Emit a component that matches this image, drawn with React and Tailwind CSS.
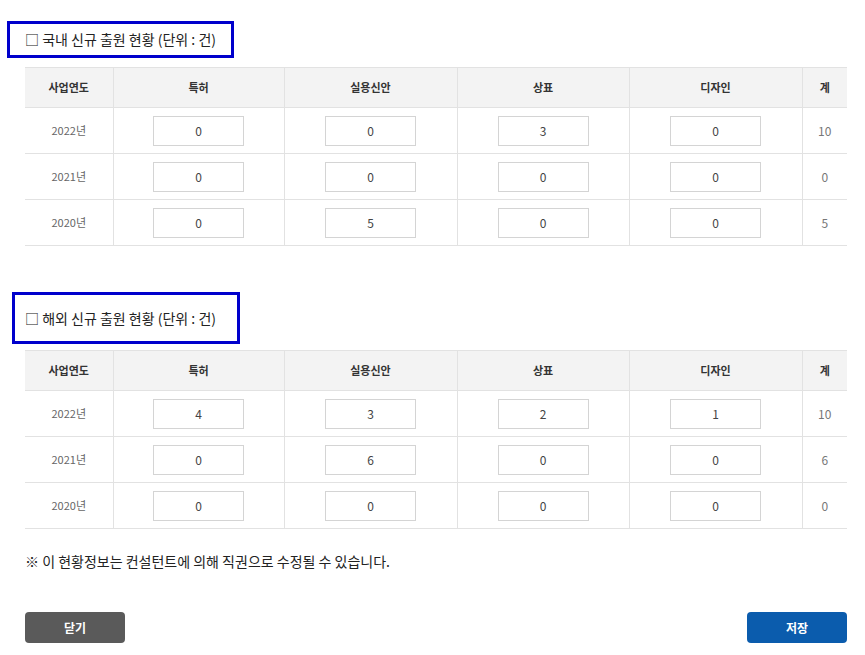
const COLS = ["사업연도", "특허", "실용신안", "상표", "디자인", "계"];
const WIDTHS = ["w-[88px]", "w-[171px]", "w-[173px]", "w-[172px]", "w-[173px]", "w-[45px]"];

const DOMESTIC = [
  { year: "2022년", vals: [0, 0, 3, 0], total: 10 },
  { year: "2021년", vals: [0, 0, 0, 0], total: 0 },
  { year: "2020년", vals: [0, 5, 0, 0], total: 5 },
];

const OVERSEAS = [
  { year: "2022년", vals: [4, 3, 2, 1], total: 10 },
  { year: "2021년", vals: [0, 6, 0, 0], total: 6 },
  { year: "2020년", vals: [0, 0, 0, 0], total: 0 },
];

function StatTable({ rows }) {
  return (
    <table className="ml-[25px] w-[822px] table-fixed border-collapse text-[11px]">
      <colgroup>
        {WIDTHS.map((w, i) => (
          <col key={i} className={w} />
        ))}
      </colgroup>
      <thead>
        <tr className="h-[40px] bg-[#f3f3f3]">
          {COLS.map((c, i) => (
            <th
              key={c}
              className={`border-y border-[#e2e2e2] font-bold text-[#333] ${
                i > 0 ? "border-l border-l-[#e2e2e2]" : ""
              }`}
            >
              {c}
            </th>
          ))}
        </tr>
      </thead>
      <tbody>
        {rows.map((r) => (
          <tr key={r.year} className="h-[46px] border-b border-[#e2e2e2]">
            <td className="text-center text-[#666]">{r.year}</td>
            {r.vals.map((v, i) => (
              <td key={i} className="border-l border-[#e2e2e2] text-center">
                <input
                  readOnly
                  value={v}
                  className="h-[30px] w-[91px] border border-[#d4d4d4] bg-white text-center text-[12px] text-[#444] outline-none"
                />
              </td>
            ))}
            <td className="border-l border-[#e2e2e2] text-center text-[12px] text-[#777]">{r.total}</td>
          </tr>
        ))}
      </tbody>
    </table>
  );
}

export default function App() {
  return (
    <div className="w-[865px] h-[655px] bg-white font-['Noto_Sans_CJK_KR','Noto_Sans',sans-serif] text-[#222]">
      <div className="pt-[21px]">
        <div className="ml-[7px] flex h-[37px] w-[227px] items-center border-[3px] border-[#0000cc] pl-[15px] text-[14px]">
          □ 국내 신규 출원 현황 (단위 : 건)
        </div>
      </div>
      <div className="mt-[9px]">
        <StatTable rows={DOMESTIC} />
      </div>

      <div className="mt-[46px] ml-[12px] flex h-[52px] w-[228px] items-center border-[3px] border-[#0000cc] pl-[10px] text-[14px]">
        □ 해외 신규 출원 현황 (단위 : 건)
      </div>
      <div className="mt-[6px]">
        <StatTable rows={OVERSEAS} />
      </div>

      <p className="mt-[22px] ml-[25px] text-[14px] leading-[20px] text-[#222]">
        ※ 이 현황정보는 컨설턴트에 의해 직권으로 수정될 수 있습니다.
      </p>

      <div className="mt-[41px] ml-[25px] flex w-[822px] justify-between">
        <button className="h-[31px] w-[100px] rounded-[4px] bg-[#5a5a5a] text-[12px] font-bold text-white">
          닫기
        </button>
        <button className="h-[31px] w-[100px] rounded-[4px] bg-[#0b5cad] text-[12px] font-bold text-white">
          저장
        </button>
      </div>
    </div>
  );
}
